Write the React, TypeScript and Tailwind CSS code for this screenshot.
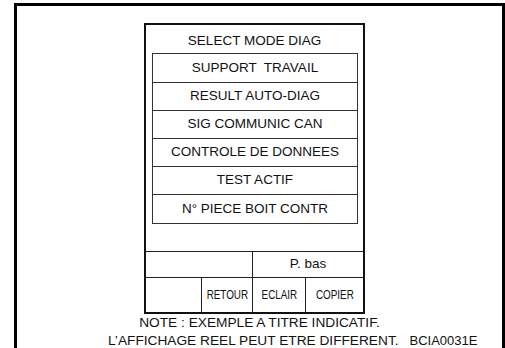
const FONT = { fontFamily: '"Liberation Sans", Arial, sans-serif' };

const ITEMS = [
  "SUPPORT  TRAVAIL",
  "RESULT AUTO-DIAG",
  "SIG COMMUNIC CAN",
  "CONTROLE DE DONNEES",
  "TEST ACTIF",
  "N° PIECE BOIT CONTR",
];

function Condensed({ children }: { children: string }) {
  return <span className="inline-block origin-center scale-x-[0.73] text-[13.5px] whitespace-nowrap">{children}</span>;
}

export default function App() {
  return (
    <div className="h-[348px] w-[505px] overflow-hidden bg-white text-[#111]" style={FONT}>
      <div className="ml-[14px] mt-[3px] h-[345px] w-[491px] border-[3px] border-b-0 border-black">
        {/* screen panel */}
        <div className="ml-[127px] mt-[17px] flex w-[221px] flex-col border-2 border-[#111]">
          <div className="flex h-[28px] items-center justify-center pt-[4px] text-[13.5px] whitespace-pre">
            SELECT MODE DIAG
          </div>
          <div className="ml-[6px] mr-[5px] flex flex-col border border-[#333]">
            {ITEMS.map((label, i) => (
              <div
                key={label}
                className={`flex items-center justify-center text-[13.5px] whitespace-pre ${
                  i === 0 ? "h-[29px]" : "h-[28px]"
                } ${i < ITEMS.length - 1 ? "border-b border-[#333]" : ""}`}
              >
                {label}
              </div>
            ))}
          </div>
          <div className="h-[27px]" />
          <div className="flex h-[26px] border-t border-[#222]">
            <div className="w-[107px] border-r border-[#222]" />
            <div className="flex flex-1 items-center justify-center text-[13.5px]">P. bas</div>
          </div>
          <div className="flex h-[35px] border-t border-[#222] text-[13px]">
            <div className="w-[56px] border-r border-[#222]" />
            <div className="flex w-[51px] items-center justify-center border-r border-[#222]">
              <Condensed>RETOUR</Condensed>
            </div>
            <div className="flex w-[53px] items-center justify-center border-r border-[#222]">
              <Condensed>ECLAIR</Condensed>
            </div>
            <div className="flex flex-1 items-center justify-center">
              <Condensed>COPIER</Condensed>
            </div>
          </div>
        </div>

        {/* caption */}
        <div className="text-[13.7px] leading-[18px]">
          <div className="text-center">NOTE : EXEMPLE A TITRE INDICATIF.</div>
          <div className="flex items-baseline whitespace-nowrap pl-[91px]">
            <span>L’AFFICHAGE REEL PEUT ETRE DIFFERENT.</span>
            <span className="ml-[11px] text-[13px]">BCIA0031E</span>
          </div>
        </div>
      </div>
    </div>
  );
}
